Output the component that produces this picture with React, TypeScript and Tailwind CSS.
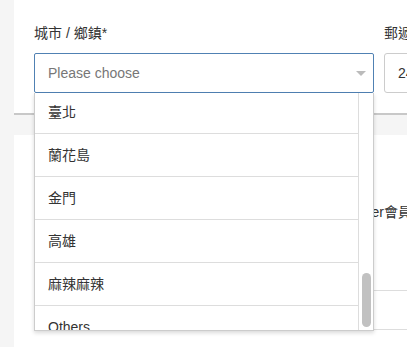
import React from 'react';

// ─── DATA ──────────────────────────────────────

const cities = ['臺北', '蘭花島', '金門', '高雄', '麻辣麻辣', 'Others'];

export default function App() {
  return (
    <div className="h-screen overflow-hidden bg-[#f5f5f5] pl-[14px] text-sm text-[#333] font-['Liberation_Sans','Noto_Sans_CJK_TC',sans-serif]">
      {/* Address panel */}
      <div className="h-[115px] bg-white border-b-2 border-[#c8c8c8] pl-5 pt-[23px] flex gap-[10px]">
        <div className="w-[340px] shrink-0">
          <label className="block h-5 leading-5">城市 / 鄉鎮*</label>
          <div className="relative mt-[10px]">
            <div className="h-10 border border-[#5081b3] rounded-[2px] pl-[13px] pr-[7px] flex items-center justify-between bg-white">
              <span className="text-[#777]">Please choose</span>
              <span className="w-0 h-0 border-x-[5px] border-t-[5px] border-x-transparent border-t-[#bbb]" />
            </div>

            {/* Dropdown */}
            <div className="absolute left-0 top-full z-10 w-full h-[238px] bg-white border-x border-b border-[#ccc] shadow-[0_2px_4px_rgba(0,0,0,0.15)] flex">
              <div className="flex-1 overflow-hidden">
                <ul className="-mt-[2px]">
                  {cities.map(c => (
                    <li key={c} className="h-[43px] border-b border-[#ddd] pl-[13px] flex items-center leading-5">
                      {c}
                    </li>
                  ))}
                </ul>
              </div>
              <div className="relative w-[15px] border-l border-[#ddd]">
                <div className="absolute left-[3px] top-[180px] w-[9px] h-[54px] rounded-full bg-[#c1c1c1]" />
              </div>
            </div>
          </div>
        </div>

        <div className="w-[200px] shrink-0">
          <label className="block h-5 leading-5 whitespace-nowrap">郵遞區號*</label>
          <div className="mt-[10px] h-10 border border-[#ccc] rounded-[3px] pl-[13px] flex items-center">241</div>
        </div>
      </div>

      {/* Member panel */}
      <div className="mt-5 h-[212px] bg-white pl-5 pt-[67px]">
        <p className="w-[378px] h-5 leading-5 text-right whitespace-nowrap">我同意成為Member會員</p>
        <div className="mt-[68px] h-10 border-y border-[#ddd]" />
      </div>
    </div>
  );
}
